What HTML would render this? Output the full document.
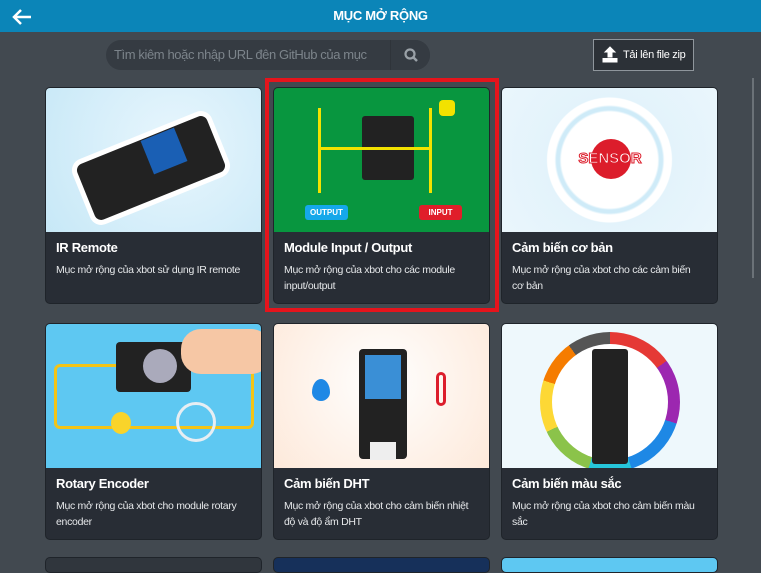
<!DOCTYPE html>
<html><head><meta charset="utf-8"><style>
*{margin:0;padding:0;box-sizing:border-box}
html,body{width:761px;height:573px;overflow:hidden}
body{background:#424950;font-family:"Liberation Sans",sans-serif;position:relative}
.hdr{position:absolute;left:0;top:0;width:761px;height:32px;background:#0b85b8;color:#fff;text-align:center;font-weight:bold;font-size:13px;line-height:32px;letter-spacing:-0.3px}
.search{position:absolute;left:106px;top:40px;width:324px;height:30px;border-radius:15px;background:#353b42;color:#7c848b;font-size:13px;letter-spacing:-0.4px;line-height:29px;padding-left:8px;white-space:nowrap;overflow:hidden}
.search .sb{position:absolute;right:0;top:0;width:40px;height:30px;border-left:1px solid #2f343a;background:#353b42}
.zip{position:absolute;left:593px;top:39px;width:101px;height:32px;border:1px solid #8f969c;background:#2c3137;color:#fff;font-size:11px;letter-spacing:-0.3px;line-height:30px;padding-left:29px;white-space:nowrap}
.card{position:absolute;width:217px;height:217px;background:#282d35;border-radius:5px;overflow:hidden;border:1px solid #1f242a}
.img{position:absolute;left:0;top:0;width:100%;height:144px;overflow:hidden}
.t{position:absolute;left:10px;top:152px;color:#fff;font-weight:bold;font-size:13px;letter-spacing:-0.3px}
.d{position:absolute;left:10px;top:174px;width:190px;color:#e6e8ea;font-size:10.5px;letter-spacing:-0.3px;line-height:16px}
.red{position:absolute;left:265px;top:78px;width:234px;height:234px;border:4px solid #e5141c}
</style></head><body>
<div class="hdr">MỤC MỞ RỘNG</div>
<svg style="position:absolute;left:11px;top:8px" width="22" height="18"><path d="M20 9H3M10 2L3 9l7 7" stroke="#fff" stroke-width="2.5" fill="none"/></svg>
<div class="search">Tìm kiêm hoặc nhập URL đên GitHub của mục<div class="sb"><svg style="position:absolute;left:13px;top:8px" width="14" height="14"><circle cx="6" cy="6" r="4.5" stroke="#9aa1a7" stroke-width="2.2" fill="none"/><path d="M9 9l4 4" stroke="#9aa1a7" stroke-width="2.5"/></svg></div></div>
<div class="zip"><svg style="position:absolute;left:8px;top:6px" width="16" height="18"><path d="M8 1L3 6h3v5h4V6h3z M1 12v4h14v-4" fill="#fff" stroke="#fff" stroke-width="1"/></svg>Tải lên file zip</div>
<div style="position:absolute;left:752px;top:78px;width:2px;height:200px;background:#6b7278"></div>

<div class="card" style="left:45px;top:87px"><div class="img" style="background:radial-gradient(circle at 60% 40%,#e8f6fd,#c7e8f7)">
<div style="position:absolute;left:30px;top:45px;width:150px;height:70px;background:#222;border:5px solid #fff;border-radius:12px;transform:rotate(-22deg)"></div>
<div style="position:absolute;left:100px;top:45px;width:36px;height:36px;background:#1a5fb4;transform:rotate(-22deg)"></div></div>
<div class="t">IR Remote</div><div class="d" style="width:205px">Mục mở rộng của xbot sử dụng IR remote</div></div>

<div class="card" style="left:273px;top:87px"><div class="img" style="background:#08963f">
<div style="position:absolute;left:88px;top:28px;width:52px;height:64px;background:#222;border-radius:3px"></div>
<div style="position:absolute;left:44px;top:20px;width:3px;height:85px;background:#f2e200"></div>
<div style="position:absolute;left:47px;top:59px;width:110px;height:3px;background:#f2e200"></div>
<div style="position:absolute;left:155px;top:20px;width:3px;height:85px;background:#f2e200"></div>
<div style="position:absolute;left:165px;top:12px;width:16px;height:16px;background:#f2e200;border-radius:4px"></div>
<div style="position:absolute;left:31px;top:117px;width:43px;height:15px;background:#15a8ea;border-radius:3px;color:#fff;font-size:8px;font-weight:bold;text-align:center;line-height:15px">OUTPUT</div>
<div style="position:absolute;left:145px;top:117px;width:43px;height:15px;background:#e01e2a;border-radius:3px;color:#fff;font-size:8px;font-weight:bold;text-align:center;line-height:15px">INPUT</div></div>
<div class="t">Module Input / Output</div><div class="d">Mục mở rộng của xbot cho các module input/output</div></div>

<div class="card" style="left:501px;top:87px"><div class="img" style="background:radial-gradient(circle at 50% 50%,#fff 0,#fff 48px,#cfebf8 50px,#cfebf8 53px,#fff 55px,#fff 62px,#e3f3fb 63px,#eaf6fc)">
<div style="position:absolute;left:89px;top:51px;width:40px;height:40px;background:#dc1d2b;border-radius:50%"></div>
<div style="position:absolute;left:58px;top:62px;width:100px;text-align:center;color:#fff;font-weight:bold;font-size:15px;-webkit-text-stroke:1px #dc1d2b">SENSOR</div></div>
<div class="t">Cảm biến cơ bản</div><div class="d">Mục mở rộng của xbot cho các cảm biến cơ bản</div></div>

<div class="card" style="left:45px;top:323px"><div class="img" style="background:#5ec8f2">
<div style="position:absolute;left:8px;top:40px;width:200px;height:65px;border:3px solid #f2c418;border-radius:6px"></div>
<div style="position:absolute;left:70px;top:18px;width:75px;height:50px;background:#222;border-radius:4px"></div>
<div style="position:absolute;left:97px;top:25px;width:34px;height:34px;background:#aab;border-radius:50%"></div>
<div style="position:absolute;left:135px;top:5px;width:90px;height:45px;background:#f6c7a5;border-radius:20px"></div>
<div style="position:absolute;left:130px;top:78px;width:40px;height:40px;border:3px solid #e7eef3;border-radius:50%"></div>
<div style="position:absolute;left:65px;top:88px;width:20px;height:22px;background:#f9d42a;border-radius:50%"></div></div>
<div class="t">Rotary Encoder</div><div class="d">Mục mở rộng của xbot cho module rotary encoder</div></div>

<div class="card" style="left:273px;top:323px"><div class="img" style="background:radial-gradient(circle at 50% 40%,#fff,#fde9da)">
<div style="position:absolute;left:85px;top:25px;width:48px;height:110px;background:#222;border-radius:4px"></div>
<div style="position:absolute;left:91px;top:31px;width:36px;height:44px;background:#3a8fd6"></div>
<div style="position:absolute;left:96px;top:118px;width:26px;height:18px;background:#eee"></div>
<div style="position:absolute;left:38px;top:55px;width:18px;height:22px;background:#1e88e5;border-radius:50% 50% 50% 50%/60% 60% 40% 40%"></div>
<div style="position:absolute;left:162px;top:48px;width:10px;height:34px;border:3px solid #dc1d2b;border-radius:5px"></div></div>
<div class="t">Cảm biến DHT</div><div class="d">Mục mở rộng của xbot cho cảm biến nhiệt độ và độ ẩm DHT</div></div>

<div class="card" style="left:501px;top:323px"><div class="img" style="background:#eef8fc">
<div style="position:absolute;left:38px;top:8px;width:140px;height:140px;border-radius:50%;background:conic-gradient(#e53935 0 15%,#9c27b0 15% 30%,#1e88e5 30% 45%,#26c6da 45% 55%,#8bc34a 55% 68%,#fdd835 68% 80%,#f57c00 80% 90%,#555 90%)"></div>
<div style="position:absolute;left:50px;top:20px;width:116px;height:116px;border-radius:50%;background:#fff"></div>
<div style="position:absolute;left:90px;top:25px;width:36px;height:115px;background:#222;border-radius:3px"></div></div>
<div class="t">Cảm biến màu sắc</div><div class="d">Mục mở rộng của xbot cho cảm biến màu sắc</div></div>

<div class="card" style="left:45px;top:557px;height:16px;background:#30363d"></div>
<div class="card" style="left:273px;top:557px;height:16px;background:#16305a"></div>
<div class="card" style="left:501px;top:557px;height:16px;background:#5ec8f2"></div>
<div class="red"></div>
</body></html>
